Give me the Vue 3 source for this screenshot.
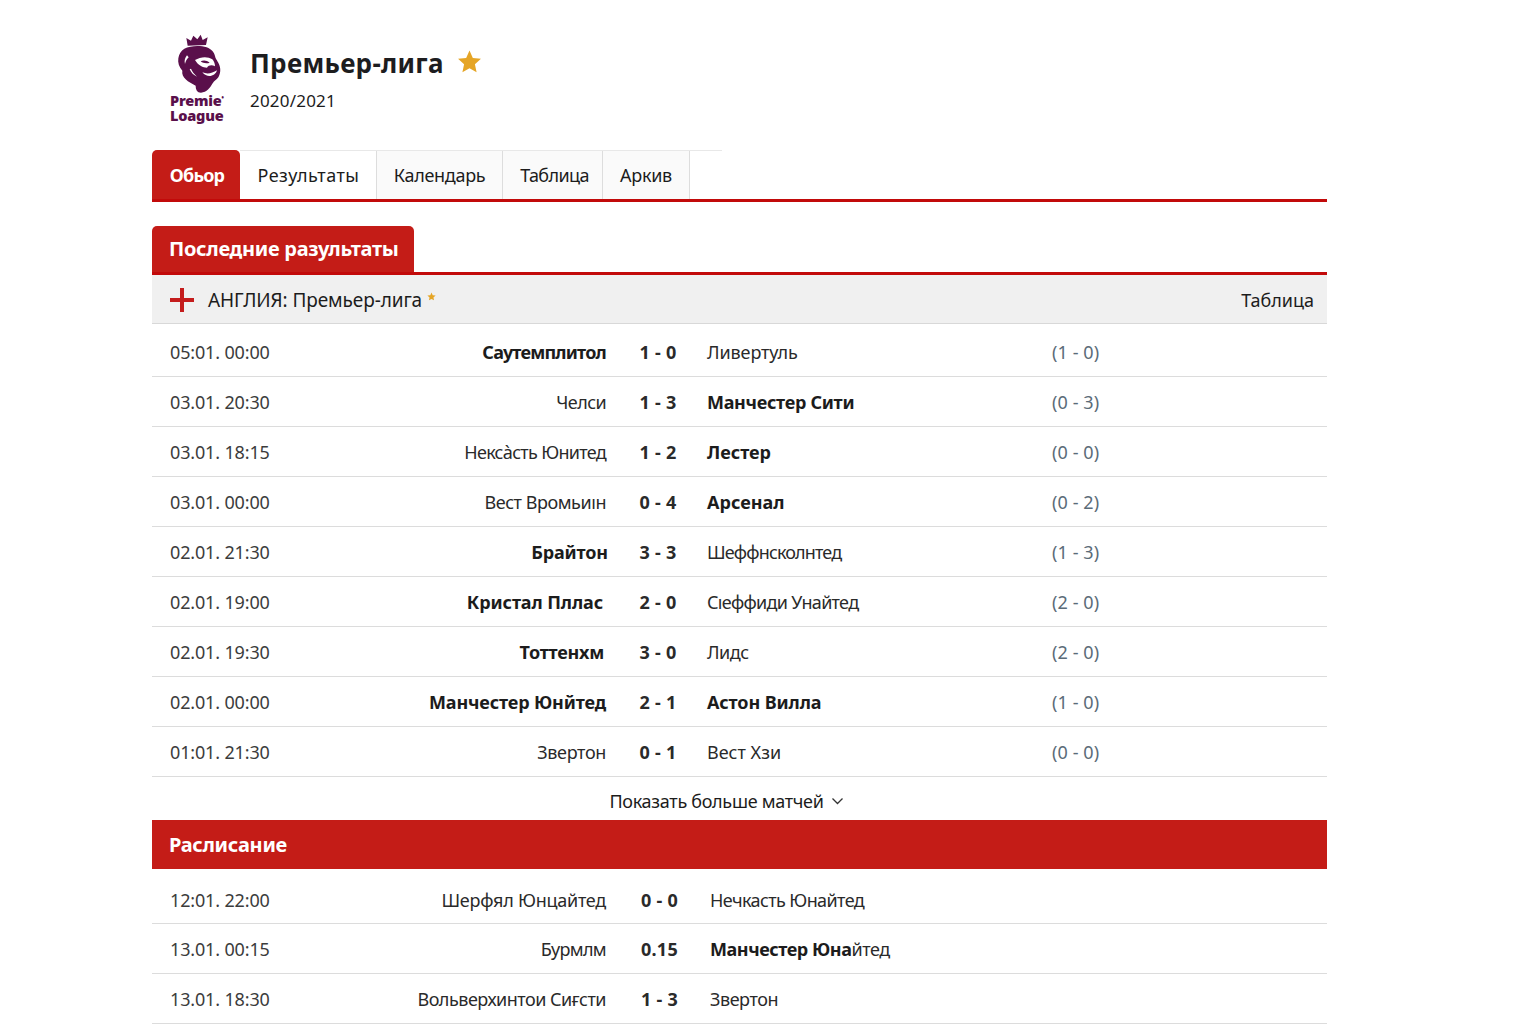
<script setup>
const tabs = ['Обьор', 'Результаты', 'Календарь', 'Таблица', 'Аркив'];

// homeFit / awayFit: letter-spacing per team name, homeShift: gap left of the score
const results = [
  { time: '05:01. 00:00', home: 'Саутемплитол', homeFit: -0.8, score: '1 - 0', away: 'Ливертуль', awayFit: -0.1, half: '(1 - 0)', win: 'home' },
  { time: '03.01. 20:30', home: 'Челси', homeFit: -0.6, score: '1 - 3', away: 'Манчестер Сити', awayFit: -0.3, half: '(0 - 3)', win: 'away' },
  { time: '03.01. 18:15', home: 'Нексàсть Юнитед', homeFit: -0.7, score: '1 - 2', away: 'Лестер', awayFit: 0, half: '(0 - 0)', win: 'away' },
  { time: '03.01. 00:00', home: 'Вест Вромьиıн', homeFit: -0.45, score: '0 - 4', away: 'Арсенал', awayFit: 0, half: '(0 - 2)', win: 'away' },
  { time: '02.01. 21:30', home: 'Брайтон', homeFit: -0.15, homeShift: -2, score: '3 - 3', away: 'Шеффнсколнтед', awayFit: -0.85, half: '(1 - 3)', win: 'home' },
  { time: '02.01. 19:00', home: 'Кристал Пллас', homeFit: -0.1, homeShift: 3, score: '2 - 0', away: 'Сıеффиди Унайтед', awayFit: -0.7, half: '(2 - 0)', win: 'home' },
  { time: '02.01. 19:30', home: 'Тоттенхм', homeFit: -0.25, homeShift: 2, score: '3 - 0', away: 'Лидс', awayFit: -0.5, half: '(2 - 0)', win: 'home' },
  { time: '02.01. 00:00', home: 'Манчестер Юнйтед', homeFit: -0.15, score: '2 - 1', away: 'Астон Вилла', awayFit: -0.1, half: '(1 - 0)', win: 'both' },
  { time: '01:01. 21:30', home: 'Звертон', homeFit: -0.35, score: '0 - 1', away: 'Вест Хзи', awayFit: 0, half: '(0 - 0)', win: 'none' }
];

const fixtures = [
  { time: '12:01. 22:00', home: 'Шерфял Юнцайтед', homeFit: -0.25, score: '0 - 0', away: 'Нечкасть Юнайтед', awayFit: -0.6 },
  { time: '13.01. 00:15', home: 'Бурмлм', homeFit: -0.65, score: '0.15', boldAway: 'Манчестер Юна', away: 'йтед', awayFit: -0.45 },
  { time: '13.01. 18:30', home: 'Вольверхинтои Сиғсти', homeFit: -0.5, score: '1 - 3', away: 'Звертон', awayFit: -0.45 }
];
</script>

<template>
  <div class="page">
    <header class="league-head">
      <div class="logo">
        <svg class="logo-mark" viewBox="0 0 198 189" width="66" height="63" aria-hidden="true">
          <path class="plum" d="M68 47 L64 24 L78 32 L85 17 L97 28 L107 14 L113 30 L128 22 L123 45 Z" />
          <path class="plum" d="M58 56 C75 47 105 45 125 52 C140 58 148 68 150 78 C152 88 158 92 163 105 C168 118 166 132 160 142 C154 150 148 152 143 160 C136 172 125 188 108 188 C96 188 92 178 92 167 C82 162 70 156 62 148 C55 140 50 133 52 122 C42 112 38 98 40 85 C42 72 48 62 58 56 Z" />
          <path class="cut" d="M90 90 C106 80 128 78 142 88 C147 94 150 101 150 109 C141 104 131 105 126 113 C114 113 99 106 90 90 Z" />
          <path class="plum" d="M107 94 C114 90 125 90 134 98 C127 101 115 101 107 94 Z" />
          <path class="cut" d="M112 127 C125 133 141 131 156 121 C151 139 127 146 112 127 Z" />
          <path class="cut" d="M66 76 C60 84 57 92 60 102 C62 94 65 88 71 82 Z" />
          <path class="cut" d="M74 118 C78 128 86 136 96 140 C88 132 82 126 78 116 Z" />
        </svg>
        <div class="logo-name">Premie<sup>•</sup><br />Loague</div>
      </div>
      <div class="league-title">
        <div class="title-row">
          <h1>Премьер-лига</h1>
          <svg class="star" viewBox="0 0 24 24" width="25" height="25" aria-hidden="true">
            <path d="M12 1.5 L15.2 8.6 L23 9.4 L17.2 14.6 L18.8 22.3 L12 18.4 L5.2 22.3 L6.8 14.6 L1 9.4 L8.8 8.6 Z" />
          </svg>
        </div>
        <div class="season">2020/2021</div>
      </div>
    </header>

    <nav class="tabs">
      <a
        v-for="(tab, i) in tabs"
        :key="tab"
        class="tab"
        :class="[`tab-${i}`, { active: i === 0 }]"
      >{{ tab }}</a>
    </nav>

    <div class="section-tab"><h2>Последние разультаты</h2></div>
    <div class="league-row">
      <svg class="flag" viewBox="0 0 24 24" width="24" height="24" aria-hidden="true">
        <path d="M10 0h4v10h10v4H14v10h-4V14H0v-4h10z" />
      </svg>
      <span class="league-name">АНГЛИЯ: Премьер-лига</span>
      <svg class="mini-star" viewBox="0 0 24 24" width="9" height="9" aria-hidden="true">
        <path d="M12 1.5 L15.2 8.6 L23 9.4 L17.2 14.6 L18.8 22.3 L12 18.4 L5.2 22.3 L6.8 14.6 L1 9.4 L8.8 8.6 Z" />
      </svg>
      <span class="league-link">Таблица</span>
    </div>

    <div
      v-for="(m, i) in results"
      :key="m.time + m.home"
      class="match"
      :class="{ first: i === 0 }"
    >
      <span class="time">{{ m.time }}</span>
      <span
        class="home"
        :class="{ bold: m.win === 'home' || m.win === 'both' }"
        :style="{ letterSpacing: m.homeFit + 'px', marginRight: (m.homeShift || 0) + 'px' }"
      >{{ m.home }}</span>
      <span class="score">{{ m.score }}</span>
      <span
        class="away"
        :class="{ bold: m.win === 'away' || m.win === 'both' }"
        :style="{ letterSpacing: m.awayFit + 'px' }"
      >{{ m.away }}</span>
      <span class="half">{{ m.half }}</span>
    </div>

    <div class="more">
      <span>Показать больше матчей</span>
      <svg viewBox="0 0 12 8" width="13" height="8" aria-hidden="true">
        <path d="M1 1.5 L6 6.5 L11 1.5" />
      </svg>
    </div>

    <div class="section-bar"><h2>Раслисание</h2></div>

    <div
      v-for="(m, i) in fixtures"
      :key="m.time"
      class="match fixture"
      :class="{ first: i === 0 }"
    >
      <span class="time">{{ m.time }}</span>
      <span class="home" :style="{ letterSpacing: m.homeFit + 'px' }">{{ m.home }}</span>
      <span class="score">{{ m.score }}</span>
      <span class="away" :style="{ letterSpacing: m.awayFit + 'px' }"><b v-if="m.boldAway">{{ m.boldAway }}</b>{{ m.away }}</span>
    </div>
  </div>
</template>

<style>
body {
  background: #fff;
}
</style>

<style scoped>
.page {
  width: 1175px;
  height: 1024px;
  margin-left: 152px;
  overflow: hidden;
  font-family: "Noto Sans", "Open Sans", sans-serif;
  font-size: 18px;
  color: #1c1c1c;
}

.league-head {
  display: flex;
  height: 150px;
  padding: 30px 0 0 13px;
  box-sizing: border-box;
}

.logo {
  width: 85px;
}

.logo-mark {
  display: block;
}

.plum {
  fill: #5a0f4b;
}

.cut {
  fill: #fff;
}

.logo-name {
  width: 66px;
  margin-left: 5px;
  font-size: 14.5px;
  line-height: 15px;
  font-weight: 900;
  letter-spacing: -0.2px;
  color: #5a0f4b;
}

.logo-name sup {
  font-size: 6px;
  line-height: 0;
}

.league-title {
  padding-top: 6px;
}

.title-row {
  display: flex;
  align-items: center;
  gap: 13px;
  height: 54px;
}

h1 {
  margin: 0;
  font-size: 26px;
  font-weight: 700;
  letter-spacing: 0.3px;
  color: #1d1d1f;
}

.star {
  fill: #e5a526;
  margin-top: -3px;
}

.season {
  font-size: 17px;
  line-height: 22px;
  letter-spacing: 0.2px;
}

.tabs {
  display: flex;
  height: 52px;
  box-sizing: border-box;
  border-bottom: 3px solid #c20a0a;
  position: relative;
}

.tabs::before {
  content: "";
  position: absolute;
  top: 0;
  left: 88px;
  width: 482px;
  height: 1px;
  background: #e8e8e8;
}

.tab {
  display: flex;
  align-items: center;
  justify-content: center;
  box-sizing: border-box;
  border-right: 1px solid #ddd;
  background: #fafafa;
  font-size: 18px;
  letter-spacing: -0.3px;
}

.tab-0 { width: 88px; }
.tab-1 { width: 137px; background: #fff; letter-spacing: 0.5px; padding-left: 1px; }
.tab-2 { width: 126px; }
.tab-3 { width: 100px; padding-left: 4px; letter-spacing: -0.6px; }
.tab-4 { width: 87px; }

.tab.active {
  border-right: 0;
  border-radius: 5px 5px 0 0;
  background: #c41c17;
  color: #fff;
  font-weight: 700;
  letter-spacing: -0.8px;
  padding-left: 2px;
}

.section-tab {
  margin-top: 24px;
  height: 49px;
  box-sizing: border-box;
  border-bottom: 3px solid #c20a0a;
}

.section-tab h2 {
  display: flex;
  align-items: center;
  width: 262px;
  height: 46px;
  margin: 0;
  padding: 0 0 2px 17px;
  box-sizing: border-box;
  border-radius: 5px 5px 0 0;
  background: #c41c17;
  color: #fff;
  font-size: 20px;
  font-weight: 700;
  letter-spacing: -0.3px;
}

.league-row {
  display: flex;
  align-items: center;
  height: 49px;
  padding: 2px 13px 0 18px;
  box-sizing: border-box;
  background: #f0f0f0;
  border-bottom: 1px solid #d8d8d8;
}

.flag {
  fill: #c41c1c;
}

.league-name {
  margin-left: 14px;
  font-size: 19px;
  letter-spacing: -0.1px;
}

.mini-star {
  fill: #e5a526;
  margin: 0 0 8px 5px;
}

.league-link {
  margin-left: auto;
}

.match {
  display: grid;
  grid-template-columns: 110px 326px 101px 345px auto;
  align-items: center;
  height: 50px;
  padding-left: 18px;
  box-sizing: border-box;
  border-bottom: 1px solid #dcdcdc;
  color: #2a2a2a;
}

.match.first {
  height: 53px;
  padding-top: 4px;
}

.time {
  color: #3c3c3c;
  letter-spacing: -0.15px;
}

.home {
  text-align: right;
  white-space: nowrap;
}

.score {
  padding-left: 3px;
  text-align: center;
  font-weight: 700;
  letter-spacing: 0.25px;
}

.away {
  white-space: nowrap;
}

.bold,
.away b {
  font-weight: 700;
  color: #1c1c1c;
}

.half {
  color: #5b6b78;
  letter-spacing: 0.1px;
}

.more {
  display: flex;
  align-items: center;
  justify-content: center;
  gap: 7px;
  height: 43px;
  padding: 4px 26px 0 0;
  box-sizing: border-box;
  letter-spacing: -0.3px;
}

.more svg {
  fill: none;
  stroke: #333;
  stroke-width: 1.3;
}

.section-bar {
  display: flex;
  align-items: center;
  height: 49px;
  padding-left: 17px;
  box-sizing: border-box;
  background: #c41c17;
}

.section-bar h2 {
  margin: 0;
  color: #fff;
  font-size: 20px;
  font-weight: 700;
  letter-spacing: -0.3px;
}

.fixture {
  grid-template-columns: 110px 326px 104px 345px;
  padding-top: 1px;
}

.fixture.first {
  height: 55px;
  padding-top: 7px;
}
</style>
